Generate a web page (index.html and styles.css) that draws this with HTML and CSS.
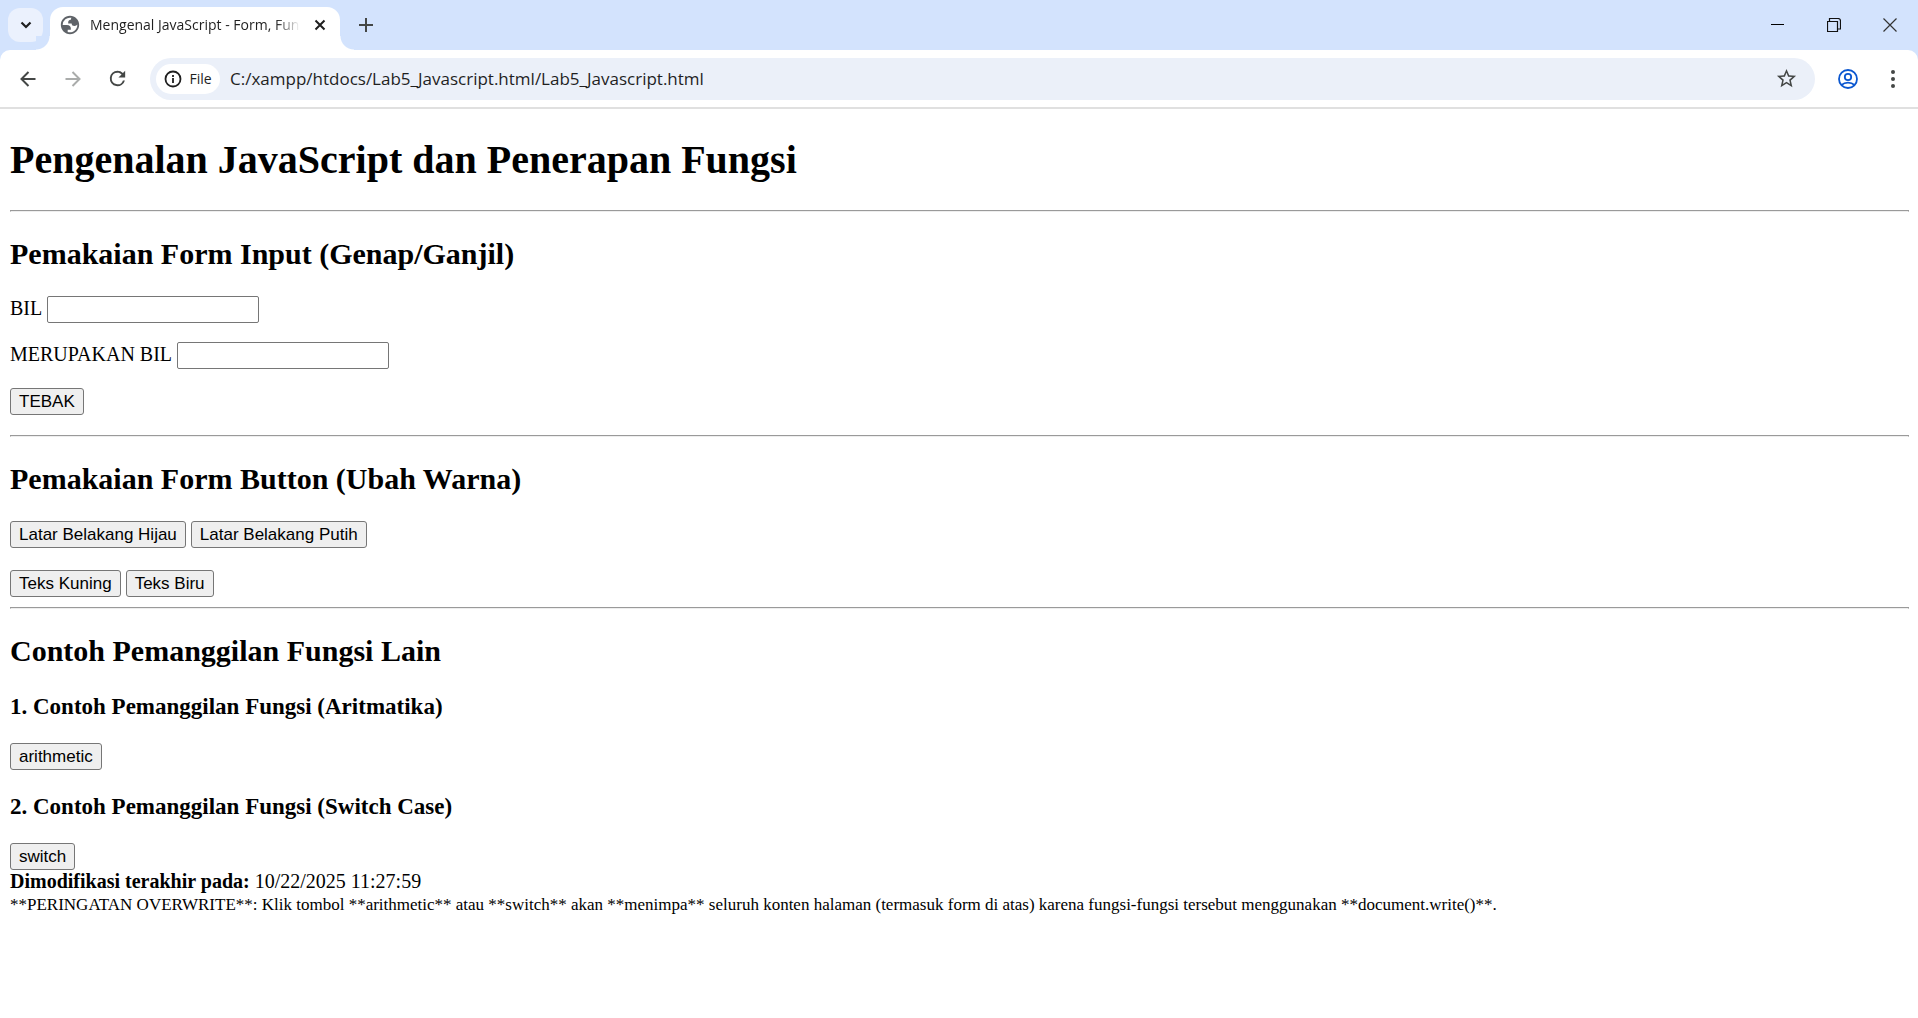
FILE: index.html
```html
<!DOCTYPE html>
<html lang="id">
<head>
<meta charset="utf-8">
<title>Mengenal JavaScript - Form, Fungsi</title>
<link rel="stylesheet" href="styles.css">
</head>
<body>
<header class="browser">
  <div class="tabstrip">
    <button class="tab-search" aria-label="Search tabs"><svg width="12" height="8" viewBox="0 0 12 8"><path d="M1.500 1.500 6 6l4.500-4.500" fill="none" stroke="#1f1f1f" stroke-width="2.200"/></svg></button>
    <div class="tab">
      <svg class="favicon" width="22" height="22" viewBox="0 0 24 24"><path fill="#5f6368" fill-rule="evenodd" d="M2 12C2 6.477 6.477 2 12 2s10 4.477 10 10-4.477 10-10 10S2 17.523 2 12zm2 0h4.400c3.407.022 4.922 1.730 4.543 5.127H9.488v2.470a8.004 8.004 0 0 0 10.498-8.083C19.327 12.504 18.332 13 17 13c-2.137 0-3.206-.916-3.206-2.750h-3.748c-.274-2.728.683-4.092 2.870-4.092 0-.975.327-1.597.811-1.970A8.004 8.004 0 0 0 4 12z"/></svg>
      <span class="tab-title">Mengenal JavaScript - Form, Fun</span>
      <button class="tab-close" aria-label="Close tab"><svg width="12" height="12" viewBox="0 0 12 12"><path d="m1.500 1.500 9 9m0-9-9 9" stroke="#1f1f1f" stroke-width="2"/></svg></button>
    </div>
    <button class="new-tab" aria-label="New tab"><svg width="14" height="14" viewBox="0 0 14 14"><path d="M7 0v14M0 7h14" stroke="#444746" stroke-width="2"/></svg></button>
    <div class="window-controls">
      <button aria-label="Minimize"><svg width="14" height="14" viewBox="0 0 14 14"><path d="M0 6.500h13" stroke="#000"/></svg></button>
      <button aria-label="Restore"><svg width="14" height="14" viewBox="0 0 14 14"><path d="M.5 3.500h10v10H.5zM2.500 3V.5H11Q13.500.5 13.500 3v8H11" fill="none" stroke="#111" stroke-width="1.200"/></svg></button>
      <button aria-label="Close"><svg width="14" height="14" viewBox="0 0 14 14"><path d="m.5.5 13 13m0-13-13 13" stroke="#333" stroke-width="1.200"/></svg></button>
    </div>
  </div>
  <div class="toolbar">
    <button class="tool" aria-label="Back"><svg width="16" height="16" viewBox="0 0 16 16"><path d="M15.500 8H2M8.500 1 1.500 8l7 7" fill="none" stroke="#444746" stroke-width="2"/></svg></button>
    <button class="tool" aria-label="Forward"><svg width="16" height="16" viewBox="0 0 16 16"><path d="M.5 8H14M7.500 1l7 7-7 7" fill="none" stroke="#aaacab" stroke-width="2"/></svg></button>
    <button class="tool" aria-label="Reload"><svg width="23" height="23" viewBox="0 0 24 24"><path fill="#444746" d="M17.650 6.350A7.950 7.950 0 0 0 12 4a8 8 0 1 0 7.730 10h-2.080A6 6 0 1 1 12 6c1.660 0 3.140.690 4.220 1.780L13 11h7V4z"/></svg></button>
    <div class="omnibox">
      <button class="file-chip"><svg width="18" height="18" viewBox="0 0 18 18"><circle cx="9" cy="9" r="7.500" fill="none" stroke="#1f1f1f" stroke-width="1.800"/><path d="M9 8v5M9 5v2" stroke="#1f1f1f" stroke-width="1.800"/></svg>File</button>
      <input class="address" aria-label="Address" value="C:/xampp/htdocs/Lab5_Javascript.html/Lab5_Javascript.html">
      <button class="star" aria-label="Bookmark"><svg width="23" height="23" viewBox="0 0 24 24"><path fill="#444746" d="m22 9.240-7.190-.62L12 2 9.190 8.630 2 9.240l5.460 4.730L5.820 21 12 17.270 18.180 21l-1.630-7.030zM12 15.400l-3.760 2.270 1-4.280-3.320-2.880 4.380-.38L12 6.100l1.710 4.040 4.380.38-3.320 2.880 1 4.280z"/></svg></button>
    </div>
    <button class="tool profile" aria-label="Profile"><svg width="20" height="20" viewBox="0 0 20 20" fill="none" stroke="#0b57d0" stroke-width="1.800"><circle cx="10" cy="10" r="9"/><circle cx="10" cy="8" r="3.200"/><path d="M3.500 16c3.500-3.200 9.500-3.200 13 0"/></svg></button>
    <button class="tool menu" aria-label="Menu"><svg width="4" height="18" viewBox="0 0 4 18" fill="#444746"><circle cx="2" cy="2" r="2"/><circle cx="2" cy="9" r="2"/><circle cx="2" cy="16" r="2"/></svg></button>
  </div>
</header>
<main class="page">
  <h1>Pengenalan JavaScript dan Penerapan Fungsi</h1>
  <hr>
  <h2>Pemakaian Form Input (Genap/Ganjil)</h2>
  <form class="guess">
    <div class="row"><label for="bil">BIL</label><input class="field" id="bil" type="text"></div>
    <div class="row"><label for="hasil">MERUPAKAN BIL</label><input class="field" id="hasil" type="text"></div>
    <div class="row"><button class="btn" type="button">TEBAK</button></div>
  </form>
  <hr>
  <h2>Pemakaian Form Button (Ubah Warna)</h2>
  <form class="colors">
    <div class="row"><button class="btn" type="button">Latar Belakang Hijau</button><button class="btn" type="button">Latar Belakang Putih</button></div>
    <div class="row"><button class="btn" type="button">Teks Kuning</button><button class="btn" type="button">Teks Biru</button></div>
  </form>
  <hr>
  <h2>Contoh Pemanggilan Fungsi Lain</h2>
  <h3>1. Contoh Pemanggilan Fungsi (Aritmatika)</h3>
  <div class="row"><button class="btn" type="button">arithmetic</button></div>
  <h3>2. Contoh Pemanggilan Fungsi (Switch Case)</h3>
  <div class="row"><button class="btn" type="button">switch</button></div>
  <div class="modified"><b>Dimodifikasi terakhir pada:</b> 10/22/2025 11:27:59</div>
  <div class="note">**PERINGATAN OVERWRITE**: Klik tombol **arithmetic** atau **switch** akan **menimpa** seluruh konten halaman (termasuk form di atas) karena fungsi-fungsi tersebut menggunakan **document.write()**.</div>
</main>
</body>
</html>
```
FILE: styles.css
```css
* {
  box-sizing: border-box;
}

body {
  margin: 0;
  background: #fff;
  color: #000;
  font-family: "Liberation Serif", "Times New Roman", serif;
  font-size: 20px;
  line-height: 23px;
}

/* Browser frame */
.browser {
  font-family: "Open Sans", "Segoe UI", sans-serif;
  color: #1f1f1f;
  background: #d3e3fd;
  border-bottom: 2px solid #e0e0e0;
}

.browser button {
  display: flex;
  align-items: center;
  justify-content: center;
  flex: none;
  padding: 0;
  border: 0;
  background: none;
  color: inherit;
  font-family: inherit;
}

.tabstrip {
  display: flex;
  height: 50px;
  padding-left: 8px;
}

.browser .tab-search {
  width: 35px;
  height: 34px;
  margin: 8px 7px 0 0;
  border-radius: 12px;
  background: #ebf1fd;
}

.tab {
  position: relative;
  display: flex;
  align-items: center;
  width: 290px;
  height: 43px;
  margin-top: 7px;
  padding: 0 11px 7px 9px;
  border-radius: 13px 13px 0 0;
  background: #fff;
}

.tab::before,
.tab::after {
  content: "";
  position: absolute;
  bottom: 0;
  width: 14px;
  height: 14px;
}

.tab::before {
  right: 100%;
  background: radial-gradient(circle at 0 0, #d3e3fd 13px, #fff 14px);
}

.tab::after {
  left: 100%;
  background: radial-gradient(circle at 100% 0, #d3e3fd 13px, #fff 14px);
}

.favicon {
  flex: none;
}

.tab-title {
  flex: 1;
  margin: 0 11px 0 9px;
  overflow: hidden;
  white-space: nowrap;
  font-size: 14px;
  line-height: 20px;
  mask-image: linear-gradient(to left, transparent, #000 24px);
}

.browser .tab-close {
  width: 18px;
  height: 18px;
}

.browser .new-tab {
  width: 34px;
  height: 34px;
  margin: 8px 0 0 9px;
}

.window-controls {
  display: flex;
  margin-left: auto;
}

.browser .window-controls button {
  width: 56px;
  height: 49px;
}

.toolbar {
  display: flex;
  align-items: center;
  height: 57px;
  padding: 0 3px 0 5px;
  border-radius: 10px 10px 0 0;
  background: #fff;
}

.browser .tool {
  width: 45px;
  height: 42px;
}

.omnibox {
  display: flex;
  flex: 1;
  align-items: center;
  height: 42px;
  margin-left: 10px;
  padding: 0 17px 0 6px;
  border-radius: 21px;
  background: #ebf0f9;
}

.browser .file-chip {
  width: 64px;
  height: 30px;
  gap: 7px;
  border-radius: 15px;
  background: #fff;
  font-size: 14px;
  font-weight: 500;
}

.address {
  flex: 1;
  min-width: 0;
  margin-left: 10px;
  padding: 0;
  border: 0;
  background: none;
  color: inherit;
  font-family: inherit;
  font-size: 17px;
}

.browser .profile {
  margin-left: 10px;
}

/* Page content */
.page {
  padding: 0 9px 0 10px;
  display: flow-root;
}

h1 {
  margin: 28px 0 27px;
  font-size: 40px;
  line-height: 46px;
}

h2 {
  margin: 25px 0;
  font-size: 30px;
  line-height: 34px;
}

h3 {
  margin: 23px 0;
  font-size: 23px;
  line-height: 27px;
}

hr {
  margin: 10px 0;
  border: 1px solid #9a9a9a;
  border-bottom-color: #eee;
}

.row {
  display: flex;
  align-items: baseline;
  gap: 5px;
}

.guess {
  display: grid;
  gap: 19px;
  margin-bottom: 20px;
}

.colors {
  display: grid;
  gap: 22px;
}

.field {
  width: 212px;
  height: 27px;
  padding: 1px 2px;
  border: 1px solid #767676;
  border-radius: 2px;
  font-family: "Liberation Sans", Arial, sans-serif;
  font-size: 17px;
}

.btn {
  height: 27px;
  padding: 0 8px;
  border: 1px solid #767676;
  border-radius: 3px;
  background: #efefef;
  color: #000;
  font-family: "Liberation Sans", Arial, sans-serif;
  font-size: 17px;
}

.note {
  font-size: 17px;
}
```
